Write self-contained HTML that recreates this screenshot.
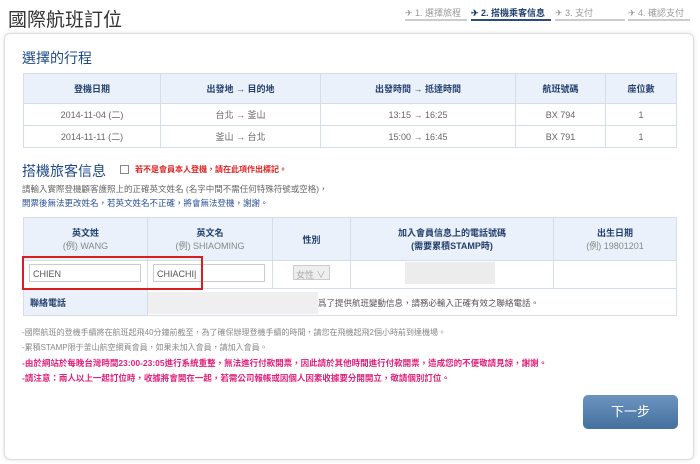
<!DOCTYPE html>
<html><head><meta charset="utf-8"><style>
*{margin:0;padding:0;box-sizing:border-box}
body{width:700px;height:464px;background:#fff;font-family:"Liberation Sans","Noto Sans CJK TC",sans-serif;position:relative;overflow:hidden;color:#555}
.a{position:absolute;white-space:nowrap}
.panel{position:absolute;left:4px;top:33px;width:690px;height:427px;border:1px solid #ddd;border-radius:6px;box-shadow:0 0 4px #e4e4e4;background:#fff}
table{position:absolute;border-collapse:collapse;font-size:9px;text-align:center}
td,th{border:1px solid #d5dde8;color:#666}
th{background:#eaf1fa;color:#223f6e;font-weight:bold}
.step{position:absolute;top:6px;font-size:9px;color:#999;height:15px;border-bottom:2px solid #ccc}
.inp{position:absolute;height:18px;border:1px solid #ccc;font-size:9px;color:#555;padding:4px 3px;background:#fff}
.gray{position:absolute;background:#e6e6e6}
</style></head><body>
<div class="a" style="left:8px;top:5px;font-size:19px;color:#333">國際航班訂位</div>
<div class="step" style="left:405px;width:62px">&#9992; 1. 選擇旅程</div>
<div class="step" style="left:471px;width:80px;color:#223f6e;font-weight:bold;border-bottom-color:#2d4e7c">&#9992; 2. 搭機乘客信息</div>
<div class="step" style="left:555px;width:70px">&#9992; 3. 支付</div>
<div class="step" style="left:628px;width:62px">&#9992; 4. 確認支付</div>
<div class="panel"></div>
<div class="a" style="left:22px;top:48px;font-size:14px;color:#1f4a86">選擇的行程</div>
<table style="left:23px;top:73px;width:654px">
<tr style="height:30px"><th style="width:137px">登機日期</th><th style="width:160px">出發地 → 目的地</th><th style="width:195px">出發時間 → 抵達時間</th><th style="width:90px">航班號碼</th><th>座位數</th></tr>
<tr style="height:22px"><td>2014-11-04 (二)</td><td>台北 → 釜山</td><td>13:15 → 16:25</td><td>BX 794</td><td>1</td></tr>
<tr style="height:22px"><td>2014-11-11 (二)</td><td>釜山 → 台北</td><td>15:00 → 16:45</td><td>BX 791</td><td>1</td></tr>
</table>
<div class="a" style="left:22px;top:161px;font-size:14px;color:#1f4a86">搭機旅客信息</div>
<div class="a" style="left:120px;top:165px;width:9px;height:9px;border:1px solid #888"></div>
<div class="a" style="left:135px;top:164px;font-size:8px;color:#d22;font-weight:bold">若不是會員本人登機，請在此項作出標記。</div>
<div class="a" style="left:22px;top:183px;font-size:8.5px;color:#666">請輸入實際登機顧客護照上的正確英文姓名 (名字中間不需任何特殊符號或空格)，</div>
<div class="a" style="left:22px;top:197px;font-size:8.5px;color:#2a4f9a">開票後無法更改姓名，若英文姓名不正確，將會無法登機，謝謝。</div>
<table style="left:23px;top:217px;width:654px">
<tr style="height:43px"><th style="width:124px">英文姓<br><span style="font-weight:normal;color:#888">(例) WANG</span></th><th style="width:125px">英文名<br><span style="font-weight:normal;color:#888">(例) SHIAOMING</span></th><th style="width:78px">性別</th><th style="width:203px">加入會員信息上的電話號碼<br>(需要累積STAMP時)</th><th>出生日期<br><span style="font-weight:normal;color:#888">(例) 19801201</span></th></tr>
<tr style="height:28px"><td></td><td></td><td></td><td></td><td></td></tr>
<tr style="height:27px"><td style="text-align:left;padding-left:6px;background:#eaf1fa;color:#223f6e;font-weight:bold">聯絡電話</td><td colspan="4"></td></tr>
</table>
<div class="inp" style="left:29px;top:264px;width:112px">CHIEN</div>
<div class="inp" style="left:153px;top:264px;width:112px">CHIACHI|</div>
<div class="inp" style="left:293px;top:265px;width:37px;height:15px;padding:2px;color:#aaa;background:#eee">女性 ∨</div>
<div class="gray" style="left:405px;top:262px;width:90px;height:22px;background:#ececec"></div>
<div class="gray" style="left:148px;top:292px;width:170px;height:22px;background:#efefef"></div>
<div class="a" style="left:318px;top:297px;font-size:8.5px;color:#555">爲了提供航班變動信息，請務必輸入正確有效之聯絡電話。</div>
<div class="a" style="left:22px;top:256px;width:181px;height:34px;border:2px solid #d81e1e"></div>
<div class="a" style="left:22px;top:327px;font-size:8px;color:#888">-國際航班的登機手續將在航班起飛40分鐘前截至，為了確保辦理登機手續的時間，請您在飛機起飛2個小時前到達機場。</div>
<div class="a" style="left:22px;top:342px;font-size:8px;color:#888">-累積STAMP限于釜山航空網頁會員，如果未加入會員，請加入會員。</div>
<div class="a" style="left:22px;top:357px;font-size:8.5px;color:#e0207a;font-weight:bold">-由於網站於每晚台灣時間23:00-23:05進行系統重整，無法進行付款開票，因此請於其他時間進行付款開票，造成您的不便敬請見諒，謝謝。</div>
<div class="a" style="left:22px;top:372px;font-size:8.5px;color:#e0207a;font-weight:bold">-請注意：兩人以上一起訂位時，收據將會開在一起，若需公司報帳或因個人因素收據要分開開立，敬請個別訂位。</div>
<div class="a" style="left:583px;top:395px;width:95px;height:34px;border-radius:5px;background:linear-gradient(#6d94bf,#44709f);color:#fff;font-size:13px;text-align:center;line-height:34px">下一步</div>
</body></html>
